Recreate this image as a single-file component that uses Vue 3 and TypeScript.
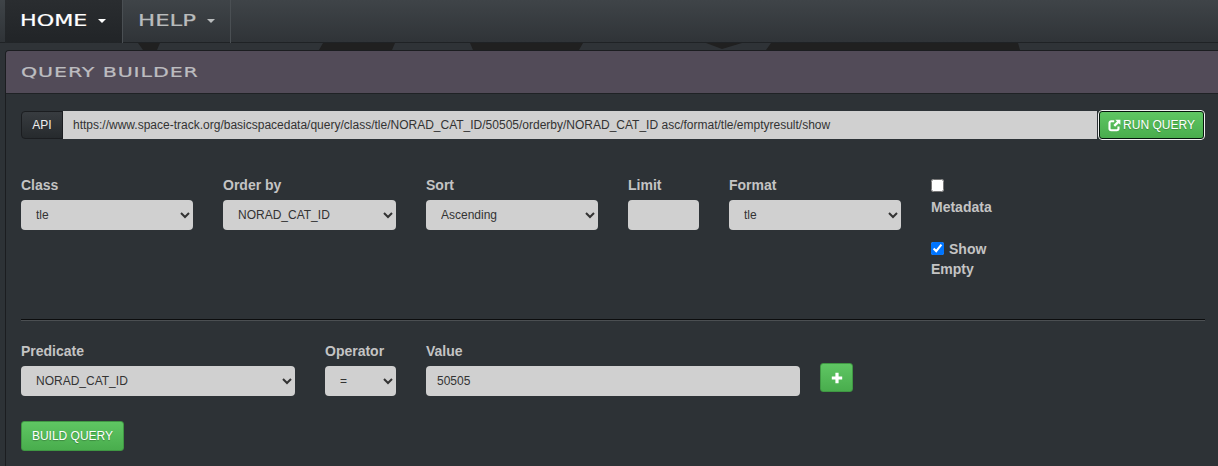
<script setup lang="ts">
const url = 'https://www.space-track.org/basicspacedata/query/class/tle/NORAD_CAT_ID/50505/orderby/NORAD_CAT_ID asc/format/tle/emptyresult/show'
const topFields = [
  { label: 'Class', value: 'tle', cls: 'w172' },
  { label: 'Order by', value: 'NORAD_CAT_ID', cls: 'w173' },
  { label: 'Sort', value: 'Ascending', cls: 'w172' },
]
</script>

<template>
  <div class="page">
    <nav class="nav">
      <div class="item active">
        <span class="brandtext home">HOME</span><span class="caret"></span>
      </div>
      <div class="item help">
        <span class="brandtext helptext">HELP</span><span class="caret dim"></span>
      </div>
    </nav>
    <div class="strip">
      <svg class="silhouette" width="1218" height="7" viewBox="0 0 1218 7">
        <path d="M138 0h22l-3 7h-14zM323 0h72l-3 7h-73zM470 0h113l-4 7h-106zM706 0h36l-20 6zM771 0h247l2 7H766z" fill="#202020" />
      </svg>
    </div>
    <section class="panel">
      <header class="head"><span class="brandtext title">QUERY BUILDER</span></header>
      <div class="body">
        <div class="api">
          <span class="addon">API</span>
          <input class="urlbox" :value="url" readonly />
          <button class="run">
            <svg width="13" height="13" viewBox="0 0 13 13">
              <path d="M6.2 2.3H3.2A1.7 1.7 0 0 0 1.5 4v5.6c0 .9.8 1.7 1.7 1.7h5.6c.9 0 1.7-.8 1.7-1.7V7.4" fill="none" stroke="#fff" stroke-width="2.1" />
              <path d="M7.4.8h5v5l-1.7-1.6-3.6 3.6-1.7-1.7 3.6-3.6z" fill="#fff" />
            </svg>
            RUN QUERY
          </button>
        </div>

        <div class="row top">
          <label v-for="f in topFields" :key="f.label" class="field" :class="f.cls">
            <span class="lab">{{ f.label }}</span>
            <select class="ctl"><option>{{ f.value }}</option></select>
          </label>
          <label class="field w71">
            <span class="lab">Limit</span>
            <input class="ctl" />
          </label>
          <label class="field w172">
            <span class="lab">Format</span>
            <select class="ctl"><option>tle</option></select>
          </label>
          <div class="checks">
            <label class="chk first">
              <input type="checkbox" /><br />
              <span class="lab meta">Metadata</span>
            </label>
            <label class="chk second">
              <input type="checkbox" checked />
              <span class="lab show">Show Empty</span>
            </label>
          </div>
        </div>

        <div class="rule"></div>

        <div class="row pred">
          <label class="field w274">
            <span class="lab">Predicate</span>
            <select class="ctl"><option>NORAD_CAT_ID</option></select>
          </label>
          <label class="field w71">
            <span class="lab">Operator</span>
            <select class="ctl"><option>=</option></select>
          </label>
          <label class="field w374">
            <span class="lab">Value</span>
            <input class="ctl" value="50505" />
          </label>
          <button class="green plus" aria-label="Add">
            <svg width="12" height="12" viewBox="0 0 12 12"><path d="M4.4.8h3.2v3.6h3.6v3.2H7.6v3.6H4.4V7.6H.8V4.4h3.6z" fill="#fff" /></svg>
          </button>
        </div>

        <button class="green build">BUILD QUERY</button>
      </div>
    </section>
  </div>
</template>

<style>
html, body { margin: 0; background: #2d3236; overflow: hidden; }
</style>

<style scoped>
.page {
  height: 466px;
  overflow: hidden;
  background: #2d3236;
  font-family: "Liberation Sans", Arial, sans-serif;
  color: #ccc;
}
.nav {
  display: flex;
  height: 43px;
  padding-left: 5px;
  background: linear-gradient(#3f4448, #2f3337);
  box-shadow: inset 0 -1px 0 #1f2225;
}
.item {
  display: flex;
  align-items: center;
  box-sizing: border-box;
  height: 43px;
  border-right: 1px solid #4a4f53;
  color: #b9bcbd;
}
.active {
  width: 118px;
  padding-left: 15px;
  background: linear-gradient(#2a2d30, #212427);
  color: #fff;
}
.help {
  width: 108px;
  padding-left: 15px;
}
.brandtext {
  display: inline-block;
  font-family: "DejaVu Sans", sans-serif;
  transform-origin: left center;
  -webkit-text-stroke: .2px currentColor;
}
.home, .helptext {
  font-size: 15px;
  line-height: 18px;
  transform: scaleX(1.48);
}
.home { width: 68px; margin-top: -1px; }
.helptext { width: 59px; margin-top: -1px; transform: scaleX(1.52); }
.caret {
  width: 0;
  height: 0;
  margin-left: 10px;
  margin-top: -1px;
  border-top: 4px solid #fff;
  border-left: 4px solid transparent;
  border-right: 4px solid transparent;
}
.caret.dim { border-top-color: #b9bcbd; }
.strip {
  height: 7px;
  background: #2f3337;
}
.silhouette { display: block; }
.panel {
  margin-left: 5px;
  border-left: 1px solid #1b1d20;
  border-top: 1px solid #1b1d20;
  border-radius: 4px 0 0 0;
  height: 416px;
  background: #2d3236;
}
.head {
  display: flex;
  align-items: center;
  box-sizing: border-box;
  height: 43px;
  padding-left: 15px;
  background: #524b58;
  border-bottom: 1px solid #1f2225;
  border-radius: 3px 0 0 0;
}
.title {
  font-size: 14px;
  color: #bdbdc0;
  letter-spacing: .6px;
  transform: scaleX(1.47);
}
.body {
  padding: 16px 13px 0 15px;
}
.api {
  display: flex;
  align-items: center;
  height: 30px;
}
.addon {
  box-sizing: border-box;
  width: 42px;
  height: 28px;
  line-height: 27px;
  text-align: center;
  font-size: 12px;
  color: #eee;
  background: linear-gradient(#383c40, #262a2d);
  border: 1px solid #1b1d20;
  border-radius: 4px 0 0 4px;
}
.urlbox {
  flex: 1;
  min-width: 0;
  box-sizing: border-box;
  height: 28px;
  padding: 0 10px;
  border: 0;
  outline: 0;
  background: #d0d0d0;
  color: #333;
  font: 12px "Liberation Sans", Arial, sans-serif;
}
.run {
  box-sizing: border-box;
  width: 107px;
  height: 30px;
  margin-left: 1px;
  padding: 0;
  display: flex;
  align-items: center;
  justify-content: center;
  gap: 2px;
  color: #fff;
  font: 12px "Liberation Sans", Arial, sans-serif;
  background: linear-gradient(#5fc663, #49ad4d);
  border: 2px solid #04160a;
  border-radius: 4px;
  outline: 1px solid #f2f2f2;
  outline-offset: -1px;
  text-shadow: 0 1px 1px rgba(0, 0, 0, .25);
}
.row {
  display: flex;
  gap: 30px;
}
.top {
  margin-top: 35px;
  height: 145px;
}
.field {
  display: flex;
  flex-direction: column;
}
.lab {
  font-size: 14px;
  font-weight: 700;
  line-height: 20px;
  color: #c4c4c4;
}
.field .lab { height: 25px; }
.w172 { width: 172px; }
.w173 { width: 173px; }
.w71 { width: 71px; }
.w274 { width: 274px; }
.w374 { width: 374px; }
.ctl {
  box-sizing: border-box;
  width: 100%;
  height: 30px;
  padding: 0 11px;
  border: 0;
  outline: 0;
  border-radius: 4px;
  background-color: #d0d0d0;
  color: #333;
  font: 12px "Liberation Sans", Arial, sans-serif;
}
.checks {
  width: 90px;
  margin-top: 1px;
}
.chk { display: block; line-height: 20px; }
.chk input { margin: 0; width: 13px; height: 13px; vertical-align: -1px; }
.first { height: 55px; }
.meta { position: relative; top: 1px; }
.second { margin-top: 8px; }
.show { margin-left: 5px; }
.rule {
  height: 1px;
  margin-top: -1px;
  background: #0c0d0e;
  border-bottom: 1px solid #4b4f52;
}
.pred {
  margin-top: 20px;
  align-items: flex-start;
}
.green {
  color: #fff;
  background: linear-gradient(#5fc663, #49ad4d);
  border: 1px solid #3f9743;
  border-radius: 3px;
  padding: 0;
  font: 12px "Liberation Sans", Arial, sans-serif;
  text-shadow: 0 1px 1px rgba(0, 0, 0, .25);
}
.plus {
  box-sizing: border-box;
  width: 33px;
  height: 29px;
  margin: 22px 0 0 -10px;
  display: flex;
  align-items: center;
  justify-content: center;
}
.build {
  display: block;
  box-sizing: border-box;
  width: 103px;
  height: 30px;
  margin-top: 25px;
}
</style>
